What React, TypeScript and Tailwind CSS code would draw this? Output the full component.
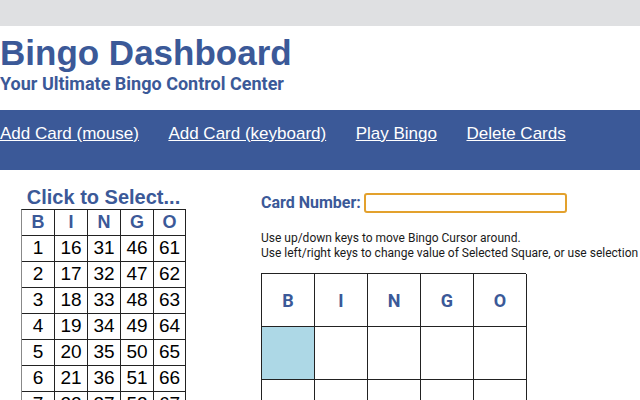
import React from "react";

const BLUE = "text-[#3b5998]";

export default function App() {
  const letters = ["B", "I", "N", "G", "O"];
  const rows = Array.from({ length: 15 }, (_, i) => i + 1);
  return (
    <div className="w-[640px] h-[400px] overflow-hidden bg-white">
      <div className="h-[26px] bg-[#dfe0e2]" />
      <div className="h-[84px] pt-[7px]">
        <h1
          className={`text-[35px] leading-[40px] font-bold ${BLUE}`}
          style={{ fontFamily: '"Liberation Sans", Arial, sans-serif' }}
        >
          Bingo Dashboard
        </h1>
        <p
          className={`mt-[1px] text-[18px] leading-[20px] font-bold ${BLUE}`}
          style={{ fontFamily: "Roboto, sans-serif" }}
        >
          Your Ultimate Bingo Control Center
        </p>
      </div>
      <nav
        className="h-[60px] bg-[#3b5998] flex gap-[29.5px] pt-[14px] text-white text-[17px] leading-[20px]"
        style={{ fontFamily: '"Liberation Sans", Arial, sans-serif' }}
      >
        <a className="underline" href="#">Add Card (mouse)</a>
        <a className="underline" href="#">Add Card (keyboard)</a>
        <a className="underline" href="#">Play Bingo</a>
        <a className="underline" href="#">Delete Cards</a>
      </nav>
      <div className="flex">
        <div
          className="w-[186px] pl-[21px] pt-[15px] shrink-0"
          style={{ fontFamily: '"Liberation Sans", Arial, sans-serif' }}
        >
          <div className={`text-center text-[20px] leading-[24px] font-bold ${BLUE}`}>
            Click to Select...
          </div>
          <div className="grid grid-cols-[33px_33px_33px_33px_32px] border-l border-t border-l-[#888] border-t-[#222]">
            {letters.map((l) => (
              <div
                key={l}
                className={`h-[26px] border-r border-b border-[#222] flex items-center justify-center text-[18px] font-bold ${BLUE}`}
              >
                {l}
              </div>
            ))}
            {rows.map((r) =>
              letters.map((l, c) => (
                <div
                  key={`${r}-${l}`}
                  className="h-[26px] border-r border-b border-[#222] flex items-center justify-center text-[19px] text-black"
                >
                  {r + c * 15}
                </div>
              ))
            )}
          </div>
        </div>
        <div className="ml-[75px] pt-[23px]" style={{ fontFamily: "Roboto, sans-serif" }}>
          <div className="flex items-center gap-[3px]">
            <span className={`text-[16px] leading-[20px] font-bold ${BLUE}`}>Card Number:</span>
            <div className="w-[203px] h-[20px] border-2 border-[#e3a12d] rounded-[3px] bg-white" />
          </div>
          <div className="mt-[18px] text-[12px] leading-[15px] text-[#1a1a1a] whitespace-nowrap">
            <div>Use up/down keys to move Bingo Cursor around.</div>
            <div>Use left/right keys to change value of Selected Square, or use selection list.</div>
          </div>
          <div className="mt-[12px] grid grid-cols-[53px_53px_53px_53px_53px] w-[265px] border-l border-t border-[#222]">
            {letters.map((l) => (
              <div
                key={l}
                className={`h-[53px] border-r border-b border-[#222] flex items-center justify-center text-[18px] font-bold ${BLUE}`}
              >
                {l}
              </div>
            ))}
            {Array.from({ length: 25 }, (_, i) => (
              <div
                key={i}
                className={`h-[53px] border-r border-b border-[#222] ${i === 0 ? "bg-[#add8e6]" : "bg-white"}`}
              />
            ))}
          </div>
        </div>
      </div>
    </div>
  );
}
